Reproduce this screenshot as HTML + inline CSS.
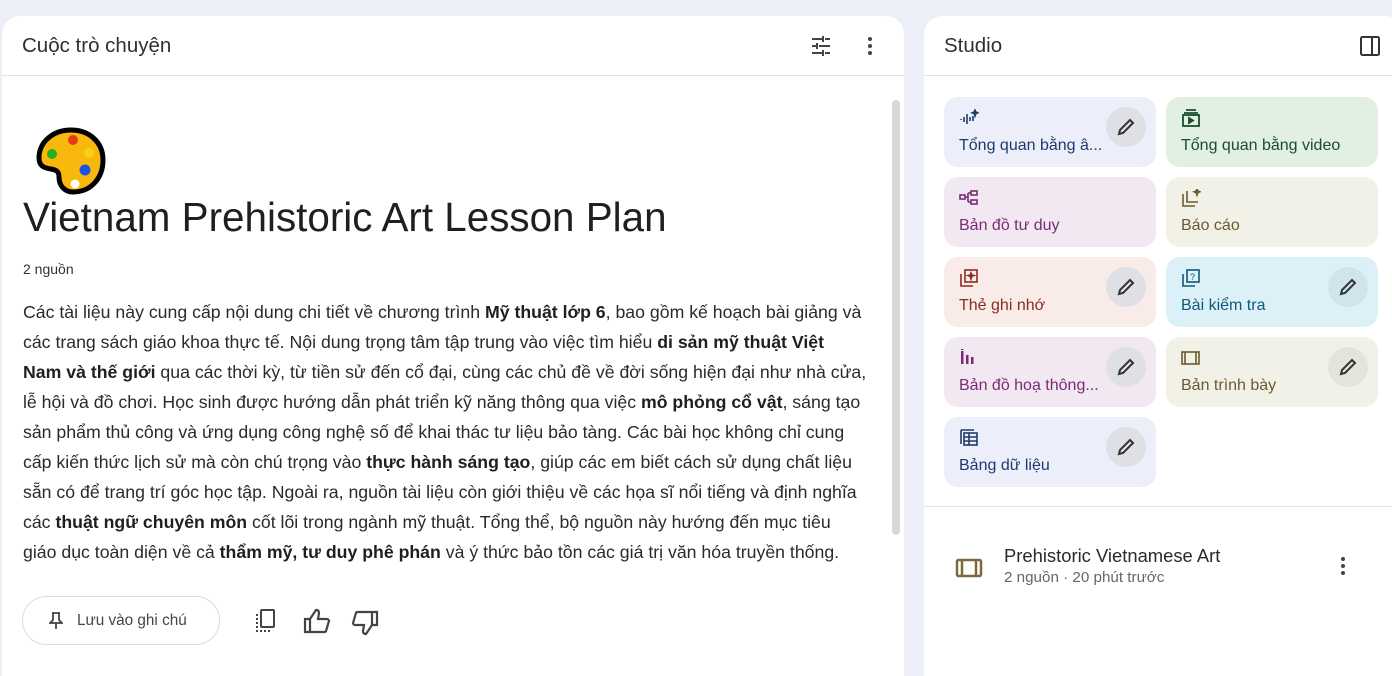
<!DOCTYPE html>
<html><head><meta charset="utf-8"><style>
*{box-sizing:border-box;margin:0;padding:0}
body{width:1392px;height:657px;overflow:hidden;background:#eceef8;font-family:"Liberation Sans",sans-serif;color:#1f1f1f;position:relative}
.panel{position:absolute;background:#fff;border-radius:18px 18px 0 0}
#left{left:2px;top:16px;width:902px;height:660px}
#right{left:924px;top:16px;width:480px;height:660px}
.hdr{height:60px;border-bottom:1px solid #e3e3e3;display:flex;align-items:center;padding-left:20px;font-size:20.5px;color:#303030}
.ic{position:absolute}
.body{position:absolute;left:21px;width:870px;font-size:17.7px;line-height:30px;color:#2a2a2a;white-space:nowrap}
.body b{color:#1f1f1f}
.card{position:absolute;width:212px;height:70px;border-radius:14px}
.card .lab{position:absolute;left:15px;top:40px;font-size:16px;white-space:nowrap}
.card svg.i{position:absolute;left:15px;top:12px}
.pen{position:absolute;right:10px;top:10px;width:40px;height:40px;border-radius:50%;background:#dfe0e6;display:flex;align-items:center;justify-content:center}
</style></head><body>
<div class="panel" id="left">
 <div class="hdr">Cuộc trò chuyện</div>
 <svg class="ic" style="left:808px;top:19px" width="22" height="22" viewBox="0 0 22 22" fill="none" stroke="#444" stroke-width="2"><path d="M2 4h10M15 4h5M13 1v6M2 11h4M9 11h11M7 8v6M2 18h10M15 18h5M13 15v6" /></svg>
 <svg class="ic" style="left:860px;top:20px" width="16" height="20"><circle cx="8" cy="3" r="2" fill="#444"/><circle cx="8" cy="10" r="2" fill="#444"/><circle cx="8" cy="17" r="2" fill="#444"/></svg>
 <div style="position:absolute;left:890px;top:84px;width:8px;height:435px;border-radius:4px;background:#d9d9dd"></div>
 <svg class="ic" style="left:33px;top:110px" width="72" height="72" viewBox="0 0 72 72"><path d="M36 4C18 4 4 16 4 32c0 8 5 10 12 11 5 1 8 2 8 8 0 9 6 15 14 15 18 0 30-14 30-32S54 4 36 4z" fill="#f9b80c" stroke="#000" stroke-width="5"/><circle cx="17" cy="28" r="5" fill="#23b022"/><circle cx="38" cy="14" r="5" fill="#e8371b"/><circle cx="54" cy="27" r="5" fill="#f5d016"/><circle cx="50" cy="44" r="5.5" fill="#1a55e0"/><circle cx="40" cy="58" r="4.5" fill="#fff"/></svg>
 <div style="position:absolute;left:21px;top:178px;font-size:40.4px;color:#1f1f1f">Vietnam Prehistoric Art Lesson Plan</div>
 <div style="position:absolute;left:21px;top:245px;font-size:14px;color:#333">2 nguồn</div>
 <div class="body" style="top:281px">Các tài liệu này cung cấp nội dung chi tiết về chương trình <b>Mỹ thuật lớp 6</b>, bao gồm kế hoạch bài giảng và<br>các trang sách giáo khoa thực tế. Nội dung trọng tâm tập trung vào việc tìm hiểu <b>di sản mỹ thuật Việt</b><br><b>Nam và thế giới</b> qua các thời kỳ, từ tiền sử đến cổ đại, cùng các chủ đề về đời sống hiện đại như nhà cửa,<br>lễ hội và đồ chơi. Học sinh được hướng dẫn phát triển kỹ năng thông qua việc <b>mô phỏng cổ vật</b>, sáng tạo<br>sản phẩm thủ công và ứng dụng công nghệ số để khai thác tư liệu bảo tàng. Các bài học không chỉ cung<br>cấp kiến thức lịch sử mà còn chú trọng vào <b>thực hành sáng tạo</b>, giúp các em biết cách sử dụng chất liệu<br>sẵn có để trang trí góc học tập. Ngoài ra, nguồn tài liệu còn giới thiệu về các họa sĩ nổi tiếng và định nghĩa<br>các <b>thuật ngữ chuyên môn</b> cốt lõi trong ngành mỹ thuật. Tổng thể, bộ nguồn này hướng đến mục tiêu<br>giáo dục toàn diện về cả <b>thẩm mỹ, tư duy phê phán</b> và ý thức bảo tồn các giá trị văn hóa truyền thống.</div>
 <div style="position:absolute;left:20px;top:580px;width:198px;height:49px;border:1px solid #dcdcdc;border-radius:25px;display:flex;align-items:center;padding-left:26px;font-size:15.3px;color:#444">
  <svg width="14" height="18" viewBox="0 0 14 18" fill="none" stroke="#444" stroke-width="1.8"><path d="M3 1h8M4 1v7L1 11h12l-3-3V1M7 11v6"/></svg><span style="margin-left:14px">Lưu vào ghi chú</span></div>
 <svg class="ic" style="left:251px;top:592px" width="24" height="26" viewBox="0 0 24 26" fill="none" stroke="#444" stroke-width="2"><rect x="8" y="2" width="13" height="17" rx="1"/><path d="M4 6v17h13" stroke-dasharray="2 2"/></svg>
 <svg class="ic" style="left:301px;top:592px" width="28" height="26" viewBox="0 0 28 26" fill="none" stroke="#444" stroke-width="2.2"><path d="M2 11h5v13H2zM7 11l6-9c2 0 3 1 3 3l-1 6h9c1 0 2 1 2 2l-3 10c0 1-1 1-2 1H7"/></svg>
 <svg class="ic" style="left:349px;top:594px" width="28" height="26" viewBox="0 0 28 26" fill="none" stroke="#444" stroke-width="2.2"><path d="M26 15h-5V2h5zM21 15l-6 9c-2 0-3-1-3-3l1-6H4c-1 0-2-1-2-2l3-10c0-1 1-1 2-1h14"/></svg>
</div>
<div class="panel" id="right">
 <div class="hdr">Studio</div>
 <svg class="ic" style="left:436px;top:20px" width="20" height="20" viewBox="0 0 20 20" fill="none" stroke="#333" stroke-width="2"><rect x="1" y="1" width="18" height="18" rx="1.5"/><path d="M12 1v18"/></svg>
 <div style="position:absolute;left:0;top:490px;width:470px;border-top:1px solid #e3e3e3"></div>
 <svg class="ic" style="left:31px;top:541px" width="28" height="22" viewBox="0 0 28 22" fill="none" stroke="#7d6a3a" stroke-width="2.5"><rect x="2" y="3" width="24" height="16" rx="1.5"/><path d="M7 3v16M21 3v16"/></svg>
 <div style="position:absolute;left:80px;top:529px;font-size:18.4px;color:#2a2a2a">Prehistoric Vietnamese Art</div>
 <div style="position:absolute;left:80px;top:553px;font-size:15.2px;color:#666">2 nguồn · 20 phút trước</div>
 <svg class="ic" style="left:412px;top:540px" width="14" height="20"><circle cx="7" cy="3" r="2" fill="#444"/><circle cx="7" cy="10" r="2" fill="#444"/><circle cx="7" cy="17" r="2" fill="#444"/></svg>
</div>

<div class="card" style="left:944px;top:97px;background:#eceffa;color:#1f3a6d"><svg class="i" width="20" height="18" viewBox="0 0 20 18" fill="none" stroke="#1f3a6d" stroke-width="1.6"><path d="M2 10v1M5 8v5M8 5v10M11 8v4M14 7v5"/><path d="M16 1l.8 2 2 .8-2 .8L16 7l-.8-2.4-2-.8 2-.8z" fill="#1f3a6d"/></svg><div class="lab">Tổng quan bằng â...</div><div class="pen"><svg width="20" height="20" viewBox="0 0 20 20" fill="none" stroke="#333" stroke-width="2"><path d="M3 17l1-4L14 3l3 3L7 16z"/></svg></div></div>
<div class="card" style="left:1166px;top:97px;background:#e1f0e3;color:#1b4d2a"><svg class="i" width="20" height="18" viewBox="0 0 20 18" fill="none" stroke="#1b4d2a" stroke-width="1.8"><path d="M5 1h10M3 4h14"/><rect x="2" y="6" width="16" height="11"/><path d="M8 9l4 2.5-4 2.5z" fill="#1b4d2a"/></svg><div class="lab">Tổng quan bằng video</div></div>
<div class="card" style="left:944px;top:177px;background:#f1e8f1;color:#7b2a78"><svg class="i" width="20" height="18" viewBox="0 0 20 18" fill="none" stroke="#7b2a78" stroke-width="1.6"><rect x="1" y="6" width="5" height="4"/><rect x="12" y="2" width="6" height="4"/><rect x="12" y="11" width="6" height="4"/><path d="M6 8h3M9 4v9M9 4h3M9 13h3"/></svg><div class="lab">Bản đồ tư duy</div></div>
<div class="card" style="left:1166px;top:177px;background:#f2f1e8;color:#6b5a2e"><svg class="i" width="20" height="18" viewBox="0 0 20 18" fill="none" stroke="#6b5a2e" stroke-width="1.6"><path d="M6 2v11h11M2 5v12h12"/><path d="M16 0l.8 2 2 .8-2 .8L16 6l-.8-2.4-2-.8 2-.8z" fill="#6b5a2e"/></svg><div class="lab">Báo cáo</div></div>
<div class="card" style="left:944px;top:257px;background:#f8ebe8;color:#8a2d21"><svg class="i" width="20" height="18" viewBox="0 0 20 18" fill="none" stroke="#8a2d21" stroke-width="1.6"><rect x="6" y="1" width="12" height="12"/><path d="M2 5v12h12"/><path d="M12 4l.8 2 2 .5-2 .7L12 10l-.8-2.8-2-.7 2-.5z" fill="#8a2d21"/></svg><div class="lab">Thẻ ghi nhớ</div><div class="pen"><svg width="20" height="20" viewBox="0 0 20 20" fill="none" stroke="#333" stroke-width="2"><path d="M3 17l1-4L14 3l3 3L7 16z"/></svg></div></div>
<div class="card" style="left:1166px;top:257px;background:#dcf0f7;color:#0d5a7a"><svg class="i" width="20" height="18" viewBox="0 0 20 18" fill="none" stroke="#0d5a7a" stroke-width="1.6"><rect x="6" y="1" width="12" height="12"/><path d="M2 5v12h12"/><text x="9" y="11" font-size="9" fill="#0d5a7a" stroke="none" font-family="Liberation Sans">?</text></svg><div class="lab">Bài kiểm tra</div><div class="pen" style="background:#d0e4ec"><svg width="20" height="20" viewBox="0 0 20 20" fill="none" stroke="#333" stroke-width="2"><path d="M3 17l1-4L14 3l3 3L7 16z"/></svg></div></div>
<div class="card" style="left:944px;top:337px;background:#f1e8f1;color:#7b2a78"><svg class="i" width="20" height="18" viewBox="0 0 20 18" fill="#7b2a78"><rect x="2" y="2" width="2.5" height="13"/><rect x="7" y="6" width="2.5" height="9"/><rect x="12" y="8" width="2.5" height="7"/><rect x="2" y="0" width="2.5" height="1"/></svg><div class="lab">Bản đồ hoạ thông...</div><div class="pen"><svg width="20" height="20" viewBox="0 0 20 20" fill="none" stroke="#333" stroke-width="2"><path d="M3 17l1-4L14 3l3 3L7 16z"/></svg></div></div>
<div class="card" style="left:1166px;top:337px;background:#f2f1e8;color:#6b5a2e"><svg class="i" width="20" height="18" viewBox="0 0 20 18" fill="none" stroke="#6b5a2e" stroke-width="1.6"><rect x="1" y="3" width="17" height="12"/><path d="M4 3v12M15 3v12"/></svg><div class="lab">Bản trình bày</div><div class="pen" style="background:#e5e4dc"><svg width="20" height="20" viewBox="0 0 20 20" fill="none" stroke="#333" stroke-width="2"><path d="M3 17l1-4L14 3l3 3L7 16z"/></svg></div></div>
<div class="card" style="left:944px;top:417px;background:#eceffa;color:#1f3a6d"><svg class="i" width="20" height="18" viewBox="0 0 20 18" fill="none" stroke="#1f3a6d" stroke-width="1.6"><rect x="5" y="4" width="13" height="12"/><path d="M2 1v14M2 1h13M5 8h13M5 12h13M10 4v12"/></svg><div class="lab">Bảng dữ liệu</div><div class="pen"><svg width="20" height="20" viewBox="0 0 20 20" fill="none" stroke="#333" stroke-width="2"><path d="M3 17l1-4L14 3l3 3L7 16z"/></svg></div></div>
</body></html>
